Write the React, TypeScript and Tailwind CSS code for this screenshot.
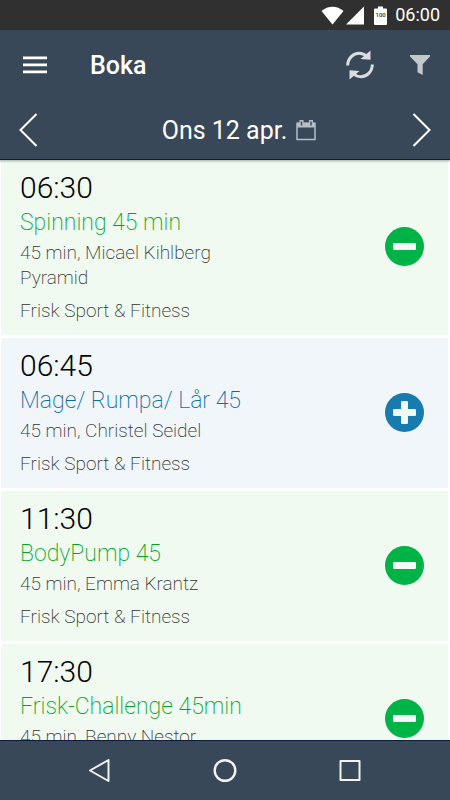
import clsx from 'clsx';

interface Session {
    time: string;
    title: string;
    details: string[];
    place: string;
    booked: boolean;
}

const sessions: Session[] = [
    { time: '06:30', title: 'Spinning 45 min', details: ['45 min, Micael Kihlberg', 'Pyramid'], place: 'Frisk Sport & Fitness', booked: true },
    { time: '06:45', title: 'Mage/ Rumpa/ Lår 45', details: ['45 min, Christel Seidel'], place: 'Frisk Sport & Fitness', booked: false },
    { time: '11:30', title: 'BodyPump 45', details: ['45 min, Emma Krantz'], place: 'Frisk Sport & Fitness', booked: true },
    { time: '17:30', title: 'Frisk-Challenge 45min', details: ['45 min, Benny Nestor'], place: 'Frisk Sport & Fitness', booked: true },
];

const StatusBar = () => (
    <div className="flex h-[30px] shrink-0 items-center justify-end bg-[#303030] pr-[10px] text-white">
        <svg width="23" height="19" viewBox="0 0 23 19" fill="currentColor" aria-hidden="true">
            <path d="M11.5 18.5 0.5 5Q5.500 0.700 11.500 0.700T22.500 5Z" />
        </svg>
        <svg className="ml-[2px]" width="18" height="19" viewBox="0 0 18 19" fill="currentColor" aria-hidden="true">
            <path d="M18 0.500V18.500H0Z" />
        </svg>
        <div className="relative ml-[10px] flex h-[19px] w-[13px] items-center justify-center">
            <svg className="absolute inset-0" width="13" height="19" viewBox="0 0 13 19" fill="currentColor" aria-hidden="true">
                <path d="M4 0.500H9V2.500H12Q13 2.500 13 3.500V18Q13 19 12 19H1Q0 19 0 18V3.500Q0 2.500 1 2.500H4Z" />
            </svg>
            <span className="relative text-[6px] leading-none font-medium text-[#303030]">100</span>
        </div>
        <span className="ml-[8px] text-[18px] leading-none">06:00</span>
    </div>
);

const Header = () => (
    <header className="shrink-0 border-b border-[#0b1c3c] bg-[#384858] text-white">
        <div className="flex h-[70px] items-center pr-[20px] pl-[23px]">
            <button type="button" aria-label="Meny">
                <svg width="24" height="18" viewBox="0 0 24 18" fill="currentColor">
                    <path d="M0 0.500H24V3.300H0ZM0 7.500H24V10.300H0ZM0 14.500H24V17.300H0Z" />
                </svg>
            </button>
            <h1 className="ml-[43px] flex-1 pt-[2px] text-[25px] leading-8 font-medium">Boka</h1>
            <button type="button" aria-label="Uppdatera" className="text-[#dadde0]">
                <svg width="30" height="30" viewBox="0 0 30 30">
                    <g fill="none" stroke="currentColor" strokeWidth="3">
                        <path d="M2.700 15.500C2.700 8 8.500 3.300 14 3.300Q18.500 3.300 22 6.500" />
                        <path d="M27.300 14.500C27.300 22 21.500 26.700 16 26.700Q11.500 26.700 8 23.500" />
                    </g>
                    <path fill="currentColor" d="M25.500 0.500V9.700L15.500 9Z" />
                    <path fill="currentColor" d="M4.500 29.500V20.300L14.500 21Z" />
                </svg>
            </button>
            <button type="button" aria-label="Filter" className="ml-[35px] text-[#c3c8cd]">
                <svg width="20" height="20" viewBox="0 0 20 20" fill="currentColor">
                    <path d="M0 0H20V1.500L12.700 9.300V20L7.500 17.200V9.300L0 1.500Z" />
                </svg>
            </button>
        </div>
        <div className="flex h-[59px] items-center justify-between px-[19px]">
            <button type="button" aria-label="Föregående dag">
                <svg width="18" height="34" viewBox="0 0 18 34" fill="none" stroke="currentColor" strokeWidth="2">
                    <path d="M17.500 1 1.500 17 17.500 33" />
                </svg>
            </button>
            <button type="button" className="ml-[28px] flex items-center gap-[9px] pt-[2px] text-[25px] leading-8">
                Ons 12 apr.
                <svg width="20" height="21" viewBox="0 0 20 21" className="text-[#b7bdc4]" aria-hidden="true">
                    <path fill="none" stroke="currentColor" strokeWidth="1.500" d="M1 3.500H19V19.500H1Z" />
                    <path fill="currentColor" d="M1 2.500H19V7.500H1Z" />
                    <path fill="currentColor" d="M3.500 0H7.500V5H3.500ZM13 0H17V5H13Z" />
                    <path fill="#384858" d="M4.800 1.500H6.200V5.500H4.800ZM14.300 1.500H15.700V5.500H14.300Z" />
                </svg>
            </button>
            <button type="button" aria-label="Nästa dag">
                <svg width="18" height="34" viewBox="0 0 18 34" fill="none" stroke="currentColor" strokeWidth="2">
                    <path d="M0.500 1 16.500 17 0.500 33" />
                </svg>
            </button>
        </div>
    </header>
);

const SessionCard = ({ session }: { session: Session }) => {
    const { time, title, details, place, booked } = session;

    return (
        <li className={clsx('flex items-center justify-between pt-[10px] pr-6 pb-3 pl-[19px]', booked ? 'bg-[#f0faf1]' : 'bg-[#f0f6fa]')}>
            <div className="text-[19px] leading-[25px] font-extralight text-[#333333]">
                <p className="text-[30px] leading-9 font-light text-black">{time}</p>
                <h2 className={clsx('text-[23px] leading-[34px]', booked ? 'text-[#00a51f]' : 'text-[#0a6ba6]')}>{title}</h2>
                {details.map((line) => (
                    <p key={line}>{line}</p>
                ))}
                <p className="mt-2">{place}</p>
            </div>
            <button type="button" aria-label={booked ? `Avboka ${title}` : `Boka ${title}`} className={booked ? 'text-[#00b347]' : 'text-[#187bb0]'}>
                <svg width="39" height="39" viewBox="0 0 39 39">
                    <circle cx="19.500" cy="19.500" r="19.500" fill="currentColor" />
                    <rect x="8" y="16" width="23" height="7" rx="1.200" fill="#f3faf6" />
                    {!booked && <rect x="16" y="8" width="7" height="23" rx="1.200" fill="#f3faf6" />}
                </svg>
            </button>
        </li>
    );
};

const NavBar = () => (
    <nav className="flex h-[60px] shrink-0 items-center justify-center gap-[101px] border-t border-[#0b1c3c] bg-[#384858] text-[#f2f2f2]">
        <button type="button" aria-label="Tillbaka">
            <svg width="24" height="24" viewBox="0 0 24 24" fill="none" stroke="currentColor" strokeWidth="2" strokeLinejoin="round">
                <path d="M20.500 1V22L2 11.500Z" />
            </svg>
        </button>
        <button type="button" aria-label="Hem">
            <svg width="24" height="24" viewBox="0 0 24 24" fill="none" stroke="currentColor" strokeWidth="2.400">
                <circle cx="12" cy="11.500" r="10.300" />
            </svg>
        </button>
        <button type="button" aria-label="Översikt">
            <svg width="24" height="24" viewBox="0 0 24 24" fill="none" stroke="currentColor" strokeWidth="2" strokeLinejoin="round">
                <rect x="2.500" y="2" width="19" height="19" />
            </svg>
        </button>
    </nav>
);

export default function App() {
    return (
        <div className="flex h-screen flex-col bg-white font-['Roboto',sans-serif]">
            <StatusBar />
            <Header />
            <main className="relative min-h-0 flex-1 overflow-y-auto [scrollbar-width:none]">
                <div className="absolute inset-x-0 top-0 h-[3px] bg-gradient-to-b from-black/25 to-transparent" />
                <ul className="flex flex-col gap-[3px] pr-[2px] pl-px">
                    {sessions.map((session) => (
                        <SessionCard key={session.time} session={session} />
                    ))}
                </ul>
            </main>
            <NavBar />
        </div>
    );
}
